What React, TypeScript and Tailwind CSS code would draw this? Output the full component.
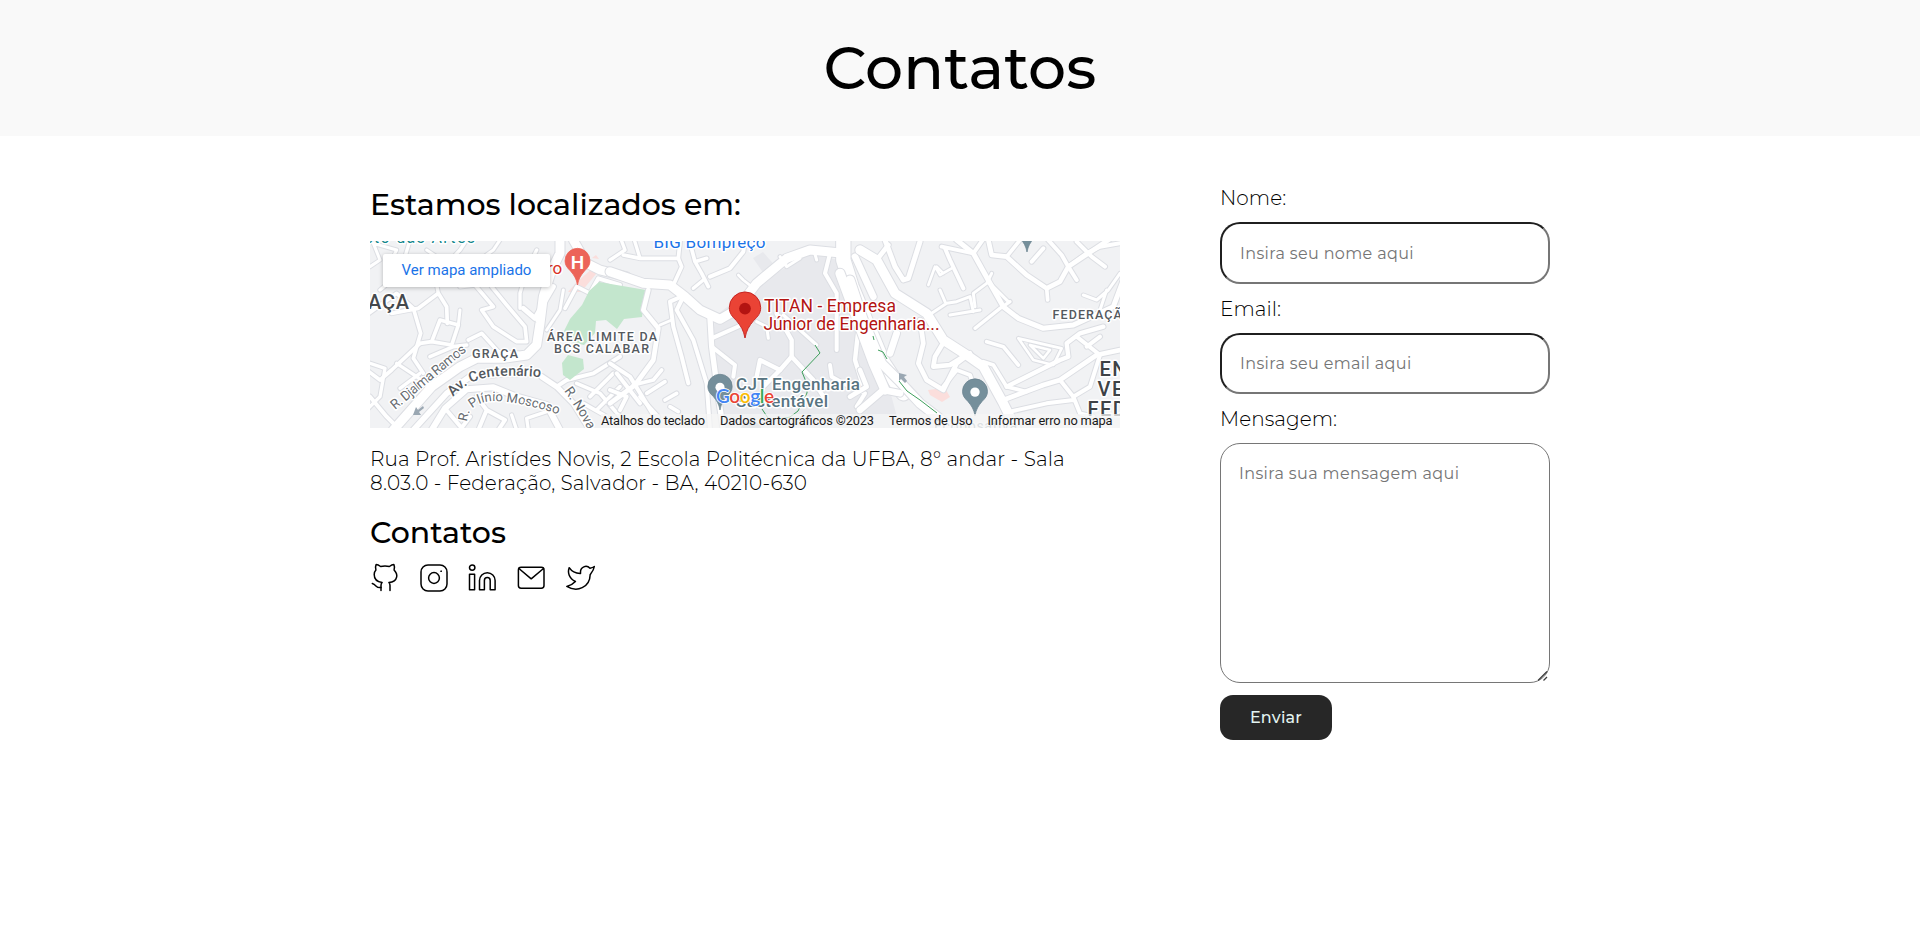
import React from "react";

type Road = { d: string; w: number };

const westRoads: Road[] = [
  { d: "M0 560 L60 500 L75 415 L30 400", w: 10 },
  { d: "M20 420 L60 450 L95 420 L180 340", w: 11 },
  { d: "M20 255 L110 190 L160 235 L182 310 L160 385 L190 430", w: 11 },
  { d: "M30 110 L60 90 L40 40 L110 60 L85 110", w: 9 },
  { d: "M60 180 L120 130 L150 30", w: 10 },
  { d: "M95 250 L175 235 L235 190 L260 230 L262 280", w: 11 },
  { d: "M180 340 L215 335 L240 270 L295 285 L275 345 L215 335", w: 11 },
  { d: "M295 285 L300 240", w: 9 },
  { d: "M235 190 L225 140 L300 60 L320 30", w: 10 },
  { d: "M200 60 L260 100 L330 110 L400 60 L420 30", w: 9 },
  { d: "M300 170 L345 165 L400 230 L365 240 L400 290 L470 335 L500 335 L495 290 L440 225 L395 170", w: 11 },
  { d: "M325 330 L365 310 L415 365 L475 370", w: 11 },
  { d: "M490 235 L525 265 L580 170", w: 15 },
  { d: "M480 235 L480 190 L500 120 L530 60", w: 10 },
  { d: "M210 380 L280 350 L320 345", w: 11 },
  { d: "M110 400 L170 440 L210 470", w: 10 },
  { d: "M30 500 L80 560 L120 600", w: 12 },
  { d: "M120 475 L180 430", w: 10 },
  { d: "M215 600 L255 535 L320 478 L400 472 L470 500 L560 525 L600 600", w: 18 },
  { d: "M255 535 L310 600 M300 600 L330 560 M355 600 L380 540 L435 570 L415 600 M380 540 L350 500", w: 12 },
  { d: "M470 600 L455 555 M505 600 L500 565 L560 545", w: 10 },
  { d: "M545 440 L590 470 L640 520 L690 600", w: 16 },
  { d: "M590 470 L620 450 L700 430 L780 380", w: 12 },
  { d: "M650 460 L720 490 L780 560 M690 500 L760 430 M710 540 L780 470 M670 520 L740 560", w: 11 },
  { d: "M615 235 L650 170 L690 190", w: 11 },
  { d: "M560 300 L600 240 L610 180", w: 9 },
  { d: "M100 600 L215 470 L300 410 L350 385 L430 385 L500 375 L530 345 L540 280 L550 200 L575 120 L600 70 L600 0", w: 27 },
  { d: "M160 600 L260 490 L330 440 L440 430 L530 430", w: 17 },
  { d: "M640 30 L680 100 L720 120 L800 140", w: 26 },
  { d: "M690 190 L715 145 L780 165", w: 12 },
];

const midRoads: Road[] = [
  { d: "M0 90 L45 60 L30 20", w: 10 },
  { d: "M40 75 L90 85 L205 85 L210 35", w: 11 },
  { d: "M70 20 L90 85", w: 10 },
  { d: "M205 85 L215 110 L190 165", w: 11 },
  { d: "M235 20 L255 95 L290 85 M255 95 L275 130 L295 170", w: 11 },
  { d: "M280 150 L250 175", w: 10 },
  { d: "M300 140 L360 115 L400 65 L405 30", w: 12 },
  { d: "M115 180 L100 240 L145 295 L130 390 L75 465 L0 520", w: 14 },
  { d: "M150 285 L185 270", w: 8 },
  { d: "M225 195 L180 215 L190 290 L215 380 L235 460", w: 12 },
  { d: "M215 210 L200 240 L250 330 L290 460 L300 600", w: 12 },
  { d: "M300 265 L305 350 L325 500 L340 600", w: 16 },
  { d: "M305 325 L395 285 M305 350 L375 405 L370 440", w: 12 },
  { d: "M0 400 L60 440 L115 530 L145 580 M20 430 L90 520 M0 480 L50 500 L30 540", w: 12 },
  { d: "M70 465 L130 450 L155 420 M90 500 L145 560 M110 490 L165 455 M165 510 L200 490 M180 530 L205 545", w: 11 },
  { d: "M440 440 L450 390 L510 420 L545 380 L545 330 L500 250", w: 13 },
  { d: "M510 420 L460 470 M545 380 L610 450 L640 500", w: 13 },
  { d: "M520 255 L620 345", w: 10 },
  { d: "M660 70 L645 130 L680 190 L680 260 L680 360", w: 12 },
  { d: "M440 275 L470 290 L475 325", w: 9 },
  { d: "M385 135 L400 150 L425 170", w: 8 },
  { d: "M570 85 L530 110 L510 80", w: 9 },
  { d: "M610 55 L620 90", w: 9 },
  { d: "M660 405 L665 440 L710 465 L765 490 L740 530", w: 12 },
  { d: "M0 125 L100 160 L180 165 L225 200 L270 240 L330 268 L370 245", w: 27 },
  { d: "M390 225 L440 160 L530 85 L600 60 L700 70", w: 27 },
  { d: "M700 20 L700 90 L725 170 L770 280 L820 400 L880 490", w: 43 },
  { d: "M735 80 L790 200", w: 20 },
  { d: "M730 260 L745 300 L735 390 L760 470", w: 13 },
];

const eastRoads: Road[] = [
  { d: "M75 30 L105 110 L130 150 L145 145 L180 35", w: 15 },
  { d: "M0 60 L50 90 L105 190 L200 250 L250 330 L320 375 L370 410 L430 520 L470 600", w: 28 },
  { d: "M50 90 L85 45", w: 14 },
  { d: "M255 55 L270 90 L310 175 M245 50 L340 70", w: 12 },
  { d: "M205 165 L225 110 L240 135 L275 115 M230 110 L250 130", w: 8 },
  { d: "M290 30 L340 70 L390 160 L430 230 L475 265 L550 295 L640 285 L760 230 L790 150", w: 15 },
  { d: "M340 70 L375 20", w: 12 },
  { d: "M390 160 L445 215 M380 160 L340 190 L345 230 M395 130 L380 160", w: 9 },
  { d: "M215 250 L260 220 L290 215 L330 200 L340 245 M270 255 L360 240 M240 180 L255 215", w: 9 },
  { d: "M345 295 L420 235 L450 215", w: 10 },
  { d: "M385 30 L395 75 L440 80 L500 135 L560 175 L600 155 L625 110 L760 20", w: 14 },
  { d: "M560 175 L563 210 M440 80 L480 30", w: 11 },
  { d: "M560 25 L605 75 L625 110 L650 150 M515 95 L550 55 M650 35 L695 80 L735 110", w: 12 },
  { d: "M625 110 L680 70 L720 50 L780 40", w: 12 },
  { d: "M670 195 L710 210 L745 180 L780 130 M740 180 L720 240", w: 9 },
  { d: "M180 270 L190 340 L175 400 L200 450 L250 480 L290 400 L330 370", w: 14 },
  { d: "M255 330 L225 380 L220 410 L270 405 L310 380", w: 14 },
  { d: "M250 470 L290 420 L330 435 L350 490", w: 12 },
  { d: "M380 335 L430 350 L475 405 M370 395 L400 405 L440 470 L500 485", w: 11 },
  { d: "M475 325 L605 355 L580 405 L520 390 L475 325 M510 345 L570 360 L550 385 L510 345", w: 8 },
  { d: "M440 470 L600 390 L625 380 L620 340 L660 310 L730 290", w: 13 },
  { d: "M430 510 L550 465 L600 450 L710 375 L780 360", w: 14 },
  { d: "M600 450 L640 500 L690 470 L720 375 L650 320 M680 350 L720 320", w: 12 },
  { d: "M640 500 L660 550 L700 560 M450 545 L560 520 L640 510", w: 12 },
  { d: "M0 420 L20 470 L-30 500", w: 14 },
  { d: "M75 480 L40 400 L-60 130", w: 28 },
  { d: "M-30 150 L10 270 L65 400 L115 450 L180 520 L270 590", w: 27 },
  { d: "M90 370 L110 310 M120 490 L70 480 L0 540", w: 20 },
];

function Roads({ roads, shift }: { roads: Road[]; shift: string }) {
  return (
    <g transform={shift} fill="none" strokeLinejoin="round" strokeLinecap="round">
      {roads.map((r, i) => (
        <path key={`c${i}`} d={r.d} stroke="#dcdee3" strokeWidth={r.w + 6} />
      ))}
      {roads.map((r, i) => (
        <path key={`r${i}`} d={r.d} stroke="#ffffff" strokeWidth={r.w} />
      ))}
    </g>
  );
}

const WEST = "translate(-10 -11) scale(0.33333)";
const MID = "translate(240 -11) scale(0.33333)";
const EAST = "translate(490 -11) scale(0.33333)";

function Pin({ x, y, s, fill, stroke, dot }: { x: number; y: number; s: number; fill: string; stroke: string; dot: string }) {
  return (
    <g transform={`translate(${x} ${y}) scale(${s})`}>
      <path
        d="M0 0 C-1.5 -8 -4 -12 -9 -18 C-13 -22 -16 -25 -16 -31 A16 16 0 0 1 16 -31 C16 -25 13 -22 9 -18 C4 -12 1.5 -8 0 0Z"
        fill={fill}
        stroke={stroke}
        strokeWidth="1"
      />
      {dot !== "none" && <circle cx="0" cy="-30" r="6" fill={dot} />}
    </g>
  );
}

function CityMap() {
  return (
    <svg className="block h-[187px] w-[750px]" viewBox="0 0 750 187" fontFamily="Roboto, sans-serif">
      <rect width="750" height="187" fill="#f1f2f4" />
      <path d="M345 75 L385 45 L440 12 L472 20 L490 70 L500 120 L520 150 L530 187 L350 187 L342 110Z" fill="#e8e9ed" />
      <path d="M383 17 L393 11 L407 27 L394 33Z" fill="#e8e9ed" />
      <path d="M206 42 L226 24 L226 33 L211 51 L198 51Z M222 17 L226 14 L229 18Z" fill="#fbdedc" />
      <path d="M558 149 L575 147 L580 156 L572 161 L560 154Z" fill="#fbdedc" />
      <Roads roads={westRoads} shift={WEST} />
      <path d="M229 41 L276 49 L272 76 L254 78 L247 88 L236 79 L226 80 L225 92 L214 104 L196 100 L193 92 L200 78 L212 64 L219 50Z" fill="#c3e6cd" />
      <path d="M198 114 L213 118 L214 128 L200 139 L193 134 L192 122Z" fill="#c3e6cd" />
      <Roads roads={midRoads} shift={MID} />
      <Roads roads={eastRoads} shift={EAST} />
      <g fill="none" stroke="#3d9f5b" strokeWidth="1">
        <path d="M445 104 L450 112 L432 131 L437 143 L437 152 L428 170 L420 176 L410 178" />
        <path d="M392 168 L400 180" />
        <path d="M503 95 L504 99 M508 109 L513 111 L517 118 M529 140 L537 150 L550 159 L567 172" />
      </g>
      <g fill="#9aa7b2">
        <path d="M43 174 L46 166 L48 169 L53 165 L54 167 L49 171 L51 174Z" />
        <path d="M529 132 L537 134 L534 136 L537 140 L535 142 L531 138 L529 140Z" />
      </g>

      <Pin x={207.500} y={44} s={0.78} fill="#ec6459" stroke="#ec6459" dot="none" />
      <text x="207.500" y="28" fontSize="19" fontWeight="600" fill="#fff" textAnchor="middle">H</text>
      <Pin x={350} y={169} s={0.76} fill="#758f9b" stroke="#6b8490" dot="#fff" />
      <Pin x={605} y={174.500} s={0.78} fill="#758f9b" stroke="#6b8490" dot="#fff" />
      <Pin x={657} y={11} s={0.76} fill="#758f9b" stroke="#6b8490" dot="#fff" />
      <circle cx="381" cy="191" r="11" fill="#b4bcc3" />
      <Pin x={375} y={97} s={0.98} fill="#ea4335" stroke="#c5221f" dot="#b31412" />

      <g stroke="#fff" strokeWidth="3" strokeLinejoin="round" paintOrder="stroke" fill="#54595e">
        <text x="-17" y="2" fontSize="16" fill="#12868b" textLength="122">Beto das Artes</text>
        <text x="283.500" y="7" fontSize="17" fill="#1a73e8" textLength="112">BIG Bompreço</text>
        <text x="177" y="33" fontSize="17" fill="#d93025">ro</text>
        <text x="-2" y="67.500" fontSize="20" fontWeight="500" fill="#44484c" textLength="41">AÇA</text>
        <text x="102" y="117" fontSize="12.500" fontWeight="500" textLength="46">GRAÇA</text>
        <text x="177" y="99.500" fontSize="12.500" fontWeight="500" textLength="110">ÁREA LIMITE DA</text>
        <text x="184" y="112" fontSize="12.500" fontWeight="500" textLength="95">BCS CALABAR</text>
        <text x="682.500" y="78" fontSize="12.500" fontWeight="500" textLength="79">FEDERAÇÃO</text>
        <text x="729.500" y="134.500" fontSize="20" fontWeight="500" fill="#3e4246" letterSpacing="1.5">ENG</text>
        <text x="727.500" y="154.500" fontSize="20" fontWeight="500" fill="#3e4246" letterSpacing="1.5">VELH</text>
        <text x="717.500" y="174.500" fontSize="20" fontWeight="500" fill="#3e4246" letterSpacing="1.5">FEDE</text>
        <text fontSize="13.500" fill="#666b70" transform="translate(25 169) rotate(-39.500)" textLength="93">R. Djalma Ramos</text>
        <path id="avenue" d="M83 156 Q100 136 130 135 Q160 134 182 138" fill="none" stroke="none" />
        <text fontSize="14.400" fontWeight="500" fill="#54595e"><textPath href="#avenue">Av. Centenário</textPath></text>
        <path id="plinio" d="M97 181 Q98 162 122 160 Q148 160 187 173" fill="none" stroke="none" />
        <text fontSize="13" fill="#666b70"><textPath href="#plinio">R. Plínio Moscoso</textPath></text>
        <path id="nova" d="M194 150 Q206 166 222 196" fill="none" stroke="none" />
        <text fontSize="13.500" fill="#666b70"><textPath href="#nova">R. Nova</textPath></text>
        <text x="394" y="71" fontSize="17.500" fill="#b31412" textLength="132">TITAN - Empresa</text>
        <text x="393.500" y="88.500" fontSize="17.500" fill="#b31412" textLength="176">Júnior de Engenharia...</text>
        <text x="366" y="149" fontSize="17" fontWeight="500" fill="#587481" textLength="124">CJT Engenharia</text>
        <text x="366" y="166" fontSize="17" fontWeight="500" fill="#587481" textLength="92">Sustentável</text>
        <text x="564" y="190" fontSize="14" fill="#8a9aa5" textLength="83">Ecoposativa</text>
      </g>
      <text x="346" y="161.500" fontFamily="Lato, sans-serif" fontSize="19" fontWeight="600" stroke="#fff" strokeWidth="1.6" paintOrder="stroke" textLength="58">
        <tspan fill="#4285f4">G</tspan><tspan fill="#ea4335">o</tspan><tspan fill="#fbbc04">o</tspan><tspan fill="#4285f4">g</tspan><tspan fill="#34a853">l</tspan><tspan fill="#ea4335">e</tspan>
      </text>
      <rect x="231" y="173" width="519" height="14" fill="#f5f5f5" fillOpacity="0.75" />
      <g fontSize="12.800" fill="#1a1a1a">
        <text x="231" y="184" textLength="104">Atalhos do teclado</text>
        <text x="350" y="184" textLength="154">Dados cartográficos ©2023</text>
        <text x="519" y="184" textLength="83.500">Termos de Uso</text>
        <text x="617.500" y="184" textLength="125">Informar erro no mapa</text>
      </g>
    </svg>
  );
}

function Icon({ children }: { children: React.ReactNode }) {
  return (
    <svg
      className="size-[30px]"
      viewBox="0 0 30 30"
      fill="none"
      stroke="#000"
      strokeWidth="1.5"
      strokeLinecap="round"
      strokeLinejoin="round"
    >
      {children}
    </svg>
  );
}

function Socials() {
  return (
    <div className="mt-[12px] flex gap-[19px]">
      <Icon>
        <path d="M11 27.500V22.500C11 21 11.400 20.200 12.100 19.500C8 19 4.200 17 4.200 11.500C4.200 9.700 4.800 8.300 5.900 7.100C5.300 5.500 5.300 3.400 6.100 1.600C7.700 1.600 9.300 2.500 10.600 3.500C13.300 2.900 16.700 2.900 19.400 3.500C20.700 2.500 22.300 1.600 23.900 1.600C24.700 3.400 24.700 5.500 24.100 7.100C25.700 8.900 27.200 11.600 26.700 13.800C25.800 18 22.300 19.200 18.900 19.500C19.700 20.200 20 21.200 20 22.500V27.500" />
        <path d="M11 24.500C9 24.800 7.500 24.500 6.200 23.200C5 22 4 21 2.300 20.500" />
      </Icon>
      <Icon>
        <rect x="2" y="2" width="26" height="26" rx="7" />
        <circle cx="15" cy="15" r="5.400" />
        <circle cx="22" cy="8.200" r="0.400" strokeWidth="1" />
      </Icon>
      <Icon>
        <circle cx="4.200" cy="4.600" r="2.700" />
        <path d="M1.500 11.200H6.600V26.700H1.500Z M11.500 26.700V17.500A7.800 7.800 0 0 1 27.100 17.500V26.700H22.200V17.500A2.900 2.900 0 0 0 16.400 17.500V26.700Z" />
      </Icon>
      <Icon>
        <rect x="1.400" y="4.300" width="25.600" height="21" rx="2.700" />
        <path d="M1.900 5.500L14.200 15.800L26.500 5.500" />
      </Icon>
      <Icon>
        <path d="M28.300 3.500C27 4.400 25.500 4.900 24 5.300C20.400 1.400 14.300 4 14.500 9.200V10.400C10 10.500 5.600 8.300 3.200 4.700C1.500 9 2.600 15 9.400 18.500C6.900 21.200 4 22.600 .8 23.400C11 29.600 23.900 24.600 24.200 11.500C26.100 9.200 27.800 7.300 28.300 3.500Z" />
      </Icon>
    </div>
  );
}

const inputClass =
  "mt-[12px] block h-[61.500px] w-full rounded-[20px] border-2 border-t-[#1f1f1f] border-l-[#1f1f1f] border-r-[#767676] border-b-[#767676] bg-white px-[18px] pt-[1px] text-[16px] font-normal tracking-[0.370px] outline-none placeholder:text-[#757575]";
const labelClass = "block text-[20px] leading-[24px] font-light tracking-[0.060px] text-black";

export default function App() {
  return (
    <div className="min-h-[932px] bg-white font-['Montserrat','Inter',sans-serif] text-black">
      <header className="flex h-[136px] items-center justify-center bg-[#f9f9f9]">
        <h1 className="text-[60px] leading-none font-medium tracking-[0.150px]">Contatos</h1>
      </header>
      <main className="mx-auto flex w-[1180px] justify-between pt-[50px]">
        <section className="w-[750px]">
          <h2 className="text-[30px] leading-[37px] font-medium">Estamos localizados em:</h2>
          <div className="relative mt-[18px]">
            <CityMap />
            <a className="absolute top-[13px] left-[13px] flex h-[33px] w-[167px] items-center justify-center rounded-[2px] bg-white font-['Roboto',sans-serif] text-[15px] text-[#1a73e8] shadow-[0_1px_4px_rgba(0,0,0,0.25)]">
              Ver mapa ampliado
            </a>
          </div>
          <p className="mt-[19px] text-[20px] leading-[24px] font-light tracking-[0.130px]">
            Rua Prof. Aristídes Novis, 2 Escola Politécnica da UFBA, 8° andar - Sala
            <br />
            8.03.0 - Federação, Salvador - BA, 40210-630
          </p>
          <h2 className="mt-[19px] text-[30px] leading-[37px] font-medium">Contatos</h2>
          <Socials />
        </section>
        <form className="w-[330px]">
          <label className={labelClass}>Nome:</label>
          <input className={inputClass} placeholder="Insira seu nome aqui" />
          <label className={`${labelClass} mt-[13px]`}>Email:</label>
          <input className={inputClass} placeholder="Insira seu email aqui" />
          <label className={`${labelClass} mt-[13px]`}>Mensagem:</label>
          <div className="relative mt-[12px]">
            <textarea
              className="block h-[240px] w-full resize-none rounded-[20px] border border-[#767676] bg-white px-[18px] py-[18px] text-[16px] font-normal tracking-[0.380px] outline-none placeholder:text-[#757575]"
              placeholder="Insira sua mensagem aqui"
            />
            <svg className="absolute right-[1px] bottom-[1px] h-[12px] w-[12px]" viewBox="0 0 12 12" stroke="#3c3c3c" strokeWidth="1.300">
              <path d="M1 10.500L10 1.500M6.500 10.500L10 7" />
            </svg>
          </div>
          <button type="button" className="mt-[12px] flex h-[45px] w-[112px] items-center justify-center rounded-[13px] bg-[#272727] pt-[1px] text-[16px] font-medium tracking-[0.200px] text-[#e3f3f0]">
            Enviar
          </button>
        </form>
      </main>
    </div>
  );
}
